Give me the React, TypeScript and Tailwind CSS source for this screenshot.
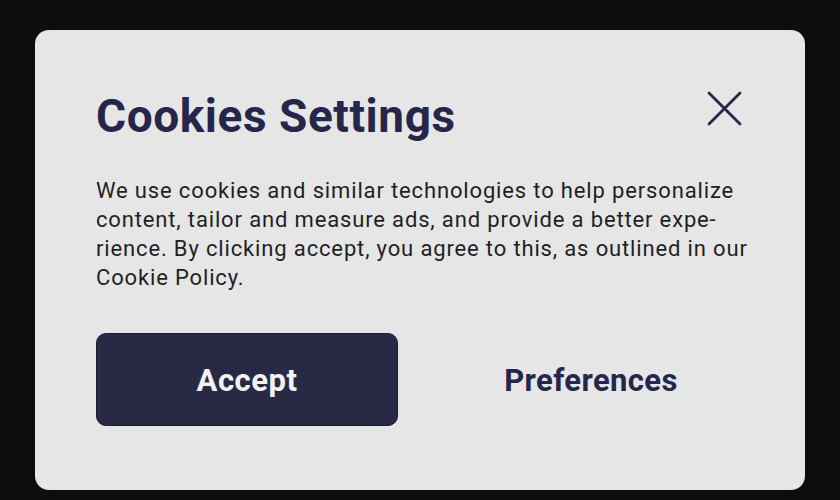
const lines = [
  'We use cookies and similar technologies to help personalize',
  'content, tailor and measure ads, and provide a better expe-',
  'rience. By clicking accept, you agree to this, as outlined in our',
  'Cookie Policy.',
];

export default function App() {
  return (
    <div className="h-[500px] w-[840px] bg-[#0d0d0d] px-[35px] pt-[30px] font-['Roboto',sans-serif]">
      <div className="flex h-[460px] flex-col rounded-[14px] bg-[#e6e6e7] px-[61px] pt-[60px]">
        <div className="flex items-center justify-between">
          <h1 className="text-[46px] font-bold leading-[52px] tracking-[0.55px] text-[#25264a]">Cookies Settings</h1>
          <button className="mr-[2px] -mt-[15px] text-[#25264a]">
            <svg width="35" height="35" viewBox="0 0 35 35" fill="none" stroke="currentColor" strokeWidth="2.8" strokeLinecap="round">
              <path d="M2 2 L33 33 M33 2 L2 33" />
            </svg>
          </button>
        </div>
        <div className="mt-[34px] text-[22px] leading-[29px] tracking-[0.85px] text-[#1f1f24]">
          {lines.map((l) => (
            <p key={l} className="whitespace-nowrap">{l}</p>
          ))}
        </div>
        <div className="mt-[41px] flex gap-[42px]">
          <button className="flex h-[93px] w-[302px] items-center justify-center rounded-[10px] border border-[#1a1a30] bg-[#292945] pt-[3px] text-[31px] font-bold tracking-[0.5px] text-[#f2f2f2]">
            Accept
          </button>
          <button className="flex h-[93px] w-[302px] items-center justify-center pt-[3px] text-[31px] font-bold tracking-[0.4px] text-[#25264a]">
            Preferences
          </button>
        </div>
      </div>
    </div>
  );
}
